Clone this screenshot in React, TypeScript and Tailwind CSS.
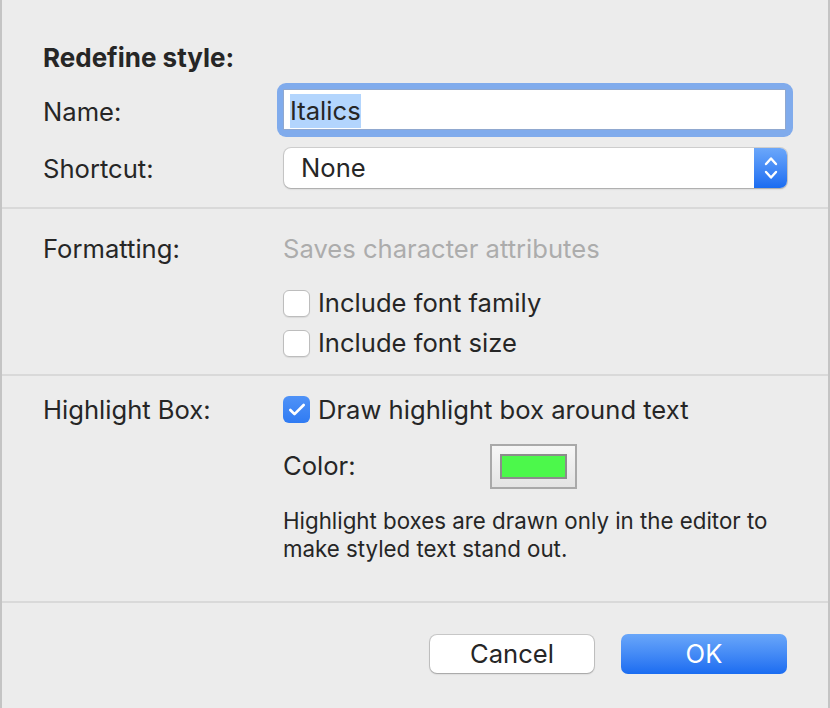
import { Check } from 'lucide-react';

const font = { fontFamily: 'Inter, "Noto Sans", sans-serif' };

function Checkbox({ checked }: { checked?: boolean }) {
  if (checked) {
    return (
      <div className="w-[27px] h-[27px] rounded-[6px] bg-gradient-to-b from-[#4f92f7] to-[#2f7bf3] flex items-center justify-center shrink-0">
        <Check className="w-[20px] h-[20px] text-white" strokeWidth={3.2} />
      </div>
    );
  }
  return (
    <div className="w-[27px] h-[27px] rounded-[6px] bg-white border border-[#bdbdbd] shadow-[0_1px_1px_rgba(0,0,0,0.08)] shrink-0" />
  );
}

function Divider() {
  return <div className="h-[2px] bg-[#d9d9d9]" />;
}

export default function App() {
  return (
    <div
      className="w-[830px] h-[708px] bg-[#ececec] text-[#262626] text-[25.6px] border-l-2 border-l-[#c4c4c4] border-r-2 border-r-[#c4c4c4] flex flex-col antialiased"
      style={font}
    >
      {/* top section */}
      <div className="pl-[41px] pr-[41px] pt-[35px] pb-[19px] flex flex-col">
        <div className="h-[44px] flex items-center font-bold text-[26px]">Redefine style:</div>
        <div className="mt-[4px] h-[54px] flex items-center mr-[-6px]">
          <div className="w-[234px] pt-[4px]">Name:</div>
          <div className="flex-1 rounded-[9px] bg-[#80abec] p-[6px] pr-[7px] pb-[7px]">
            <div className="h-[41px] bg-white border border-[#90a8cf] flex items-center pl-[6px] pt-[2px]">
              <span className="bg-[#b3d5fd] leading-[34px]">Italics</span>
            </div>
          </div>
        </div>
        <div className="mt-[11px] h-[40px] flex items-center">
          <div className="w-[241px] pt-[3px]">Shortcut:</div>
          <div className="flex-1 h-[40px] flex rounded-[7px] bg-white shadow-[0_0_0_1px_rgba(0,0,0,0.12),0_1px_2px_rgba(0,0,0,0.2)]">
            <div className="flex-1 flex items-center pl-[17px]">None</div>
            <div className="w-[33px] rounded-r-[7px] bg-gradient-to-b from-[#6ba7fa] to-[#1a6cf1] flex items-center justify-center">
              <svg width="16" height="28" viewBox="0 0 16 28" fill="none" stroke="white" strokeWidth="2.4" strokeLinecap="round" strokeLinejoin="round">
                <path d="M3 10 L8 4.5 L13 10" />
                <path d="M3 18 L8 23.5 L13 18" />
              </svg>
            </div>
          </div>
        </div>
      </div>
      <Divider />

      {/* formatting */}
      <div className="pl-[41px] pr-[41px] pt-[22px] pb-[11px] flex flex-col">
        <div className="h-[36px] flex items-center">
          <div className="w-[240px]">Formatting:</div>
          <div className="text-[#acacac]">Saves character attributes</div>
        </div>
        <div className="mt-[16px] pl-[240px] flex flex-col">
          <div className="h-[40px] flex items-center gap-[8px]">
            <Checkbox />
            <span>Include font family</span>
          </div>
          <div className="h-[40px] flex items-center gap-[8px]">
            <Checkbox />
            <span>Include font size</span>
          </div>
        </div>
      </div>
      <Divider />

      {/* highlight */}
      <div className="pl-[41px] pr-[41px] pt-[14px] flex flex-col h-[225px]">
        <div className="h-[40px] flex items-center">
          <div className="w-[240px]">Highlight Box:</div>
          <div className="flex items-center gap-[8px]">
            <Checkbox checked />
            <span>Draw highlight box around text</span>
          </div>
        </div>
        <div className="mt-[14px] pl-[240px] h-[45px] flex items-center">
          <div className="w-[207px]">Color:</div>
          <div className="w-[87px] h-[45px] border-2 border-[#a9a9a9] bg-gradient-to-b from-[#f6f6f6] to-[#e4e4e4] flex items-center justify-center">
            <div className="w-[67px] h-[25px] border-2 border-[#8c8c8c] bg-[#4cf84b]" />
          </div>
        </div>
        <div className="mt-[18px] pl-[240px] text-[22.3px] leading-[28px]">
          Highlight boxes are drawn only in the editor to
          <br />
          make styled text stand out.
        </div>
      </div>
      <Divider />

      {/* buttons */}
      <div className="flex-1 flex justify-end items-start pt-[31px] pr-[41px] gap-[27px]">
        <button className="w-[164px] h-[38px] mt-[1px] rounded-[7px] bg-white text-[25.6px] text-[#262626] shadow-[0_0_0_1px_rgba(0,0,0,0.15),0_1px_2px_rgba(0,0,0,0.2)] flex items-center justify-center">
          Cancel
        </button>
        <button className="w-[166px] h-[40px] rounded-[7px] bg-gradient-to-b from-[#69a6f9] to-[#1a6cf1] text-[25.6px] text-white flex items-center justify-center">
          OK
        </button>
      </div>
    </div>
  );
}
